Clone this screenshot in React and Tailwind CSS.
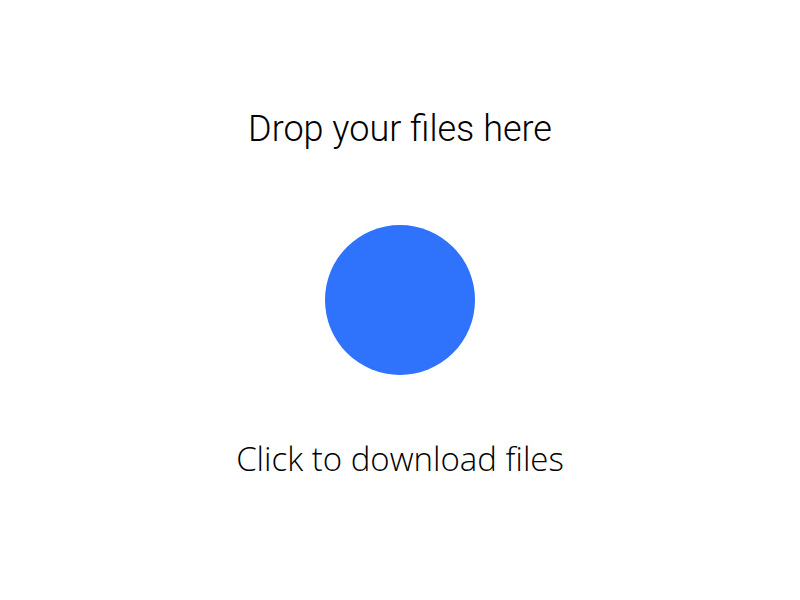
export default function App() {
  return (
    <div className="flex h-[600px] w-full flex-col items-center bg-white text-black">
      <p
        className="mt-[107px] text-[36px] font-light leading-[44px]"
        style={{ fontFamily: 'Roboto, sans-serif' }}
      >
        Drop your files here
      </p>
      <div className="mt-[74px] h-[150px] w-[150px] rounded-full bg-[#2f73fd]" />
      <p
        className="mt-[60px] text-[33px] font-light leading-[48px]"
        style={{ fontFamily: '"Open Sans", sans-serif' }}
      >
        Click to download files
      </p>
    </div>
  );
}
